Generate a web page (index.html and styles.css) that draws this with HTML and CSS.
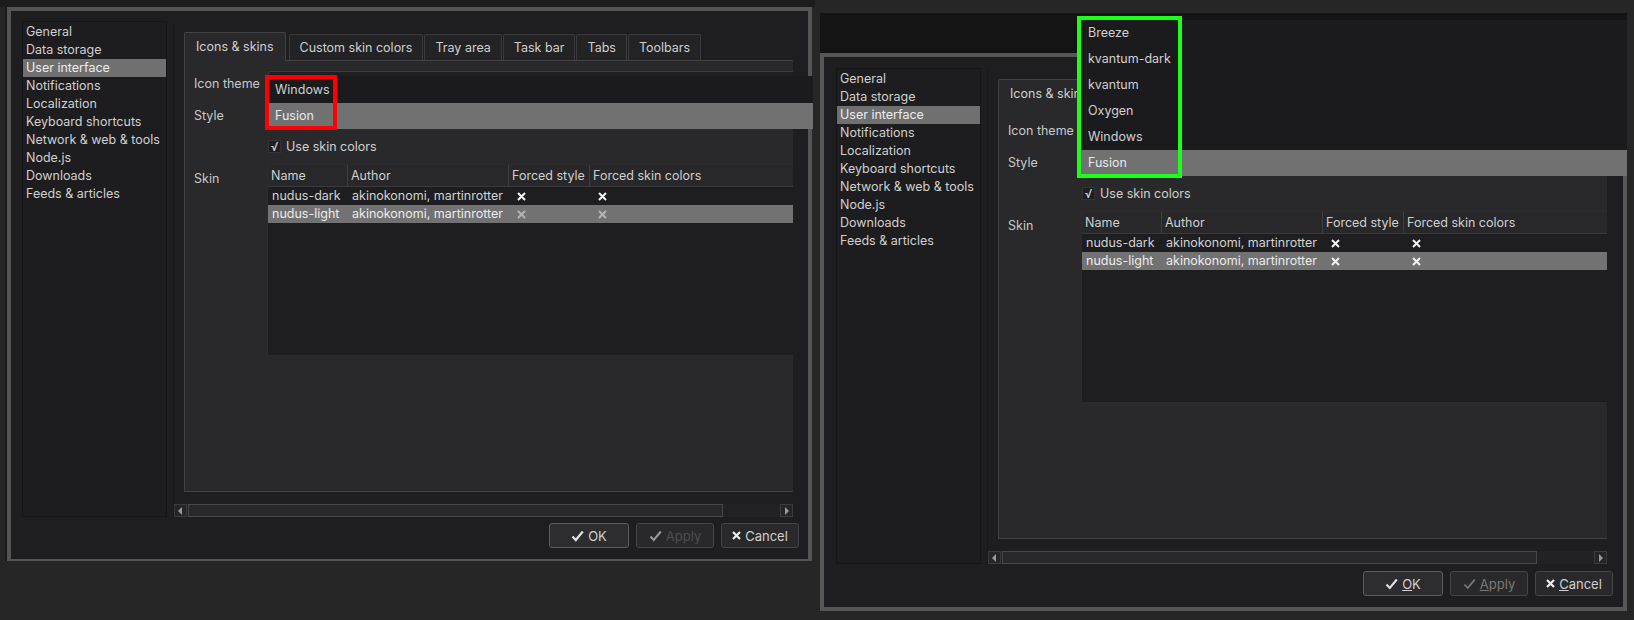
FILE: index.html
```html
<!DOCTYPE html>
<html lang="en">
<head>
    <meta charset="UTF-8">
    <title>Settings - User interface</title>
    <link rel="stylesheet" href="styles.css">
</head>
<body>
<div class="desktop">
    <div class="backdrop-left"></div>
    <div class="backdrop-right"></div>

    <!-- left dialog -->
    <div class="window win-left">
        <div class="win-body">
            <ul class="nav">
                <li>General</li>
                <li>Data storage</li>
                <li class="selected">User interface</li>
                <li>Notifications</li>
                <li>Localization</li>
                <li>Keyboard shortcuts</li>
                <li>Network &amp; web &amp; tools</li>
                <li>Node.js</li>
                <li>Downloads</li>
                <li>Feeds &amp; articles</li>
            </ul>
            <div class="scroll">
                <div class="viewport">
                    <div class="tabwidget">
                        <div class="tabbar">
                            <div class="tab active">Icons &amp; skins</div>
                            <div class="tab">Custom skin colors</div>
                            <div class="tab">Tray area</div>
                            <div class="tab">Task bar</div>
                            <div class="tab">Tabs</div>
                            <div class="tab">Toolbars</div>
                        </div>
                        <div class="pane">
                            <div class="row">
                                <span class="label">Icon theme</span>
                                <div class="combo"></div>
                            </div>
                            <div class="row row-style">
                                <span class="label">Style</span>
                                <div class="combo"></div>
                            </div>
                            <div class="row row-check">
                                <span class="checkbox">&#x221A;</span>
                                <span>Use skin colors</span>
                            </div>
                            <div class="row row-skin">
                                <span class="label">Skin</span>
                                <div class="table">
                                    <div class="cols thead">
                                        <div>Name</div><div>Author</div><div>Forced style</div><div>Forced skin colors</div>
                                    </div>
                                    <div class="cols trow">
                                        <div>nudus-dark</div><div>akinokonomi, martinrotter</div>
                                        <div class="cross"><svg width="9" height="9" viewBox="0 0 9 9"><path d="M1 1L8 8M8 1L1 8" stroke="currentColor" stroke-width="2"/></svg></div>
                                        <div class="cross"><svg width="9" height="9" viewBox="0 0 9 9"><path d="M1 1L8 8M8 1L1 8" stroke="currentColor" stroke-width="2"/></svg></div>
                                    </div>
                                    <div class="cols trow selected">
                                        <div>nudus-light</div><div>akinokonomi, martinrotter</div>
                                        <div class="cross dim"><svg width="9" height="9" viewBox="0 0 9 9"><path d="M1 1L8 8M8 1L1 8" stroke="currentColor" stroke-width="2"/></svg></div>
                                        <div class="cross dim"><svg width="9" height="9" viewBox="0 0 9 9"><path d="M1 1L8 8M8 1L1 8" stroke="currentColor" stroke-width="2"/></svg></div>
                                    </div>
                                </div>
                            </div>
                        </div>
                    </div>
                </div>
                <div class="hscroll">
                    <div class="sb-btn"><svg width="5" height="8" viewBox="0 0 5 8"><path d="M4 0V8L0 4Z" fill="#9a9a9a"/></svg></div>
                    <div class="sb-track"><div class="sb-handle"></div></div>
                    <div class="sb-btn"><svg width="5" height="8" viewBox="0 0 5 8"><path d="M1 0V8L5 4Z" fill="#9a9a9a"/></svg></div>
                </div>
            </div>
        </div>
        <div class="buttons">
            <div class="btn btn-ok"><svg width="13" height="12" viewBox="0 0 13 12"><path d="M1.5 6.5L4.8 10L11.8 1.5" fill="none" stroke="#e2e2e2" stroke-width="2.2"/></svg>OK</div>
            <div class="btn btn-apply"><svg width="13" height="12" viewBox="0 0 13 12"><path d="M1.5 6.5L4.8 10L11.8 1.5" fill="none" stroke="#9a9a9a" stroke-width="2"/></svg>Apply</div>
            <div class="btn btn-cancel"><svg width="9" height="9" viewBox="0 0 9 9"><path d="M1 1L8 8M8 1L1 8" stroke="#ececec" stroke-width="2.2"/></svg>Cancel</div>
        </div>
    </div>

    <!-- right dialog -->
    <div class="window win-right">
        <div class="win-body">
            <ul class="nav">
                <li>General</li>
                <li>Data storage</li>
                <li class="selected">User interface</li>
                <li>Notifications</li>
                <li>Localization</li>
                <li>Keyboard shortcuts</li>
                <li>Network &amp; web &amp; tools</li>
                <li>Node.js</li>
                <li>Downloads</li>
                <li>Feeds &amp; articles</li>
            </ul>
            <div class="scroll">
                <div class="viewport">
                    <div class="tabwidget">
                        <div class="tabbar">
                            <div class="tab active">Icons &amp; skins</div>
                            <div class="tab">Custom skin colors</div>
                            <div class="tab">Tray area</div>
                            <div class="tab">Task bar</div>
                            <div class="tab">Tabs</div>
                            <div class="tab">Toolbars</div>
                        </div>
                        <div class="pane">
                            <div class="row">
                                <span class="label">Icon theme</span>
                                <div class="combo"></div>
                            </div>
                            <div class="row row-style">
                                <span class="label">Style</span>
                                <div class="combo"></div>
                            </div>
                            <div class="row row-check">
                                <span class="checkbox">&#x221A;</span>
                                <span>Use skin colors</span>
                            </div>
                            <div class="row row-skin">
                                <span class="label">Skin</span>
                                <div class="table">
                                    <div class="cols thead">
                                        <div>Name</div><div>Author</div><div>Forced style</div><div>Forced skin colors</div>
                                    </div>
                                    <div class="cols trow">
                                        <div>nudus-dark</div><div>akinokonomi, martinrotter</div>
                                        <div class="cross"><svg width="9" height="9" viewBox="0 0 9 9"><path d="M1 1L8 8M8 1L1 8" stroke="currentColor" stroke-width="2"/></svg></div>
                                        <div class="cross"><svg width="9" height="9" viewBox="0 0 9 9"><path d="M1 1L8 8M8 1L1 8" stroke="currentColor" stroke-width="2"/></svg></div>
                                    </div>
                                    <div class="cols trow selected">
                                        <div>nudus-light</div><div>akinokonomi, martinrotter</div>
                                        <div class="cross"><svg width="9" height="9" viewBox="0 0 9 9"><path d="M1 1L8 8M8 1L1 8" stroke="currentColor" stroke-width="2"/></svg></div>
                                        <div class="cross"><svg width="9" height="9" viewBox="0 0 9 9"><path d="M1 1L8 8M8 1L1 8" stroke="currentColor" stroke-width="2"/></svg></div>
                                    </div>
                                </div>
                            </div>
                        </div>
                    </div>
                </div>
                <div class="hscroll">
                    <div class="sb-btn"><svg width="5" height="8" viewBox="0 0 5 8"><path d="M4 0V8L0 4Z" fill="#9a9a9a"/></svg></div>
                    <div class="sb-track"><div class="sb-handle"></div></div>
                    <div class="sb-btn"><svg width="5" height="8" viewBox="0 0 5 8"><path d="M1 0V8L5 4Z" fill="#9a9a9a"/></svg></div>
                </div>
            </div>
        </div>
        <div class="buttons">
            <div class="btn btn-ok"><svg width="13" height="12" viewBox="0 0 13 12"><path d="M1.5 6.5L4.8 10L11.8 1.5" fill="none" stroke="#e2e2e2" stroke-width="2"/></svg><span><u>O</u>K</span></div>
            <div class="btn btn-apply"><svg width="13" height="12" viewBox="0 0 13 12"><path d="M1.5 6.5L4.8 10L11.8 1.5" fill="none" stroke="#7a7a7a" stroke-width="1.8"/></svg><span><u>A</u>pply</span></div>
            <div class="btn btn-cancel"><svg width="9" height="9" viewBox="0 0 9 9"><path d="M1 1L8 8M8 1L1 8" stroke="#ececec" stroke-width="2.2"/></svg><span><u>C</u>ancel</span></div>
        </div>
    </div>

    <!-- open combo box popups -->
    <div class="popup popup-left">
        <div>Windows</div>
        <div class="current">Fusion</div>
    </div>
    <div class="popup popup-right">
        <div>Breeze</div>
        <div>kvantum-dark</div>
        <div>kvantum</div>
        <div>Oxygen</div>
        <div>Windows</div>
        <div class="current">Fusion</div>
    </div>

    <div class="mark mark-red"></div>
    <div class="mark mark-green"></div>
</div>
</body>
</html>
```

FILE: styles.css
```css
* {
    box-sizing: border-box;
}
body {
    margin: 0;
    background: #262626;
    font-family: Inter, "Noto Sans", sans-serif;
    font-size: 12.5px;
    color: #cfcfcf;
}
.desktop {
    position: relative;
    width: 1634px;
    height: 620px;
    overflow: hidden;
}
.backdrop-left {
    position: absolute;
    left: 0;
    top: 0;
    width: 815px;
    height: 7px;
    background: #1c1c1d;
}
.backdrop-right {
    position: absolute;
    left: 820px;
    top: 13px;
    width: 807px;
    height: 40px;
    background: #141414;
}

/* dialog windows */
.window {
    position: absolute;
    display: flex;
    flex-direction: column;
    background: #1e1e20;
    border: 4px solid #545454;
}
.win-left {
    left: 7px;
    top: 7px;
    width: 805px;
    height: 554px;
    padding: 10px 9px 0 11px;
    border-bottom-width: 2px;
    box-shadow: -2px 0 0 #1a1a1a;
}
.win-right {
    left: 820px;
    top: 53px;
    width: 807px;
    height: 558px;
    padding: 11px 10px 0 12px;
    border-color: #575757;
}
.win-body {
    display: flex;
    gap: 6px;
    height: 496px;
    margin-right: 6px;
}

/* page list */
.nav {
    list-style: none;
    margin: 0;
    padding: 1px 0 0;
    width: 145px;
    flex-shrink: 0;
    background: #1d1d1f;
    border: 1px solid #151517;
}
.nav li {
    height: 18px;
    line-height: 18px;
    padding-left: 3px;
    color: #d0d0d0;
    white-space: nowrap;
}
.nav li.selected {
    background: #707070;
    color: #ececec;
}

/* scroll area */
.scroll {
    width: 620px;
    flex-shrink: 0;
    display: flex;
    flex-direction: column;
    border-left: 1px solid #19191b;
}
.viewport {
    flex: 1;
    overflow: hidden;
    padding: 11px 0 12px 10px;
}
.tabwidget {
    width: 640px;
    height: 100%;
    display: flex;
    flex-direction: column;
}
.tabbar {
    display: flex;
    align-items: flex-end;
    gap: 1px;
    height: 28px;
    flex-shrink: 0;
}
.tab {
    height: 26px;
    line-height: 25px;
    padding: 0 10px;
    background: #232325;
    border: 1px solid #3a3a3c;
    border-bottom: none;
    border-radius: 2px 2px 0 0;
    white-space: nowrap;
    color: #cfcfcf;
}
.tab.active {
    position: relative;
    z-index: 1;
    height: 29px;
    line-height: 27px;
    margin-bottom: -1px;
    margin-right: 2px;
    padding: 0 11px;
    background: #29292b;
    border-color: #424244;
}
.pane {
    flex: 1;
    background: #29292b;
    border: 1px solid #424244;
    padding: 10px 0 0 9px;
}

/* form rows */
.row {
    display: flex;
    align-items: center;
}
.label {
    width: 74px;
    flex-shrink: 0;
    color: #c8c8c8;
    white-space: nowrap;
}
.combo {
    flex: 1;
    height: 25px;
    margin-right: 20px;
    background: #1f1f21;
    border: 1px solid #3c3c3e;
    border-radius: 2px;
}
.row-style {
    margin-top: 7px;
}
.row-check {
    margin-top: 10px;
    height: 16px;
    padding-left: 74px;
    gap: 5px;
}
.checkbox {
    width: 13px;
    height: 13px;
    background: #1f1f21;
    border: 1px solid #343436;
    font-size: 12px;
    line-height: 11px;
    text-align: center;
    color: #d6d6d6;
}
.row-skin {
    margin-top: 10px;
    align-items: flex-start;
}
.row-skin .label {
    padding-top: 7px;
}

/* skins table */
.table {
    flex: 1;
    height: 192px;
    margin-left: -1px;
    margin-right: 10px;
    background: #1e1e20;
    border: 1px solid #2c2c2e;
}
.cols {
    display: grid;
    grid-template-columns: 80px 161px 81px 1fr;
}
.thead {
    height: 22px;
    background: #28282a;
    border-bottom: 1px solid #3a3a3c;
}
.thead div {
    padding-left: 3px;
    line-height: 21px;
    border-right: 1px solid #3e3e40;
    white-space: nowrap;
}
.trow {
    height: 18px;
    line-height: 18px;
    color: #d2d2d2;
}
.trow div {
    padding-left: 4px;
    white-space: nowrap;
}
.trow.selected {
    background: #727272;
    color: #ececec;
}
.trow .cross {
    display: flex;
    align-items: center;
    padding-left: 8px;
    color: #f2f2f2;
}
.trow .cross.dim {
    color: #b4b4b4;
}

/* horizontal scroll bar */
.hscroll {
    display: flex;
    height: 13px;
    flex-shrink: 0;
    background: #222224;
}
.sb-btn {
    width: 13px;
    height: 13px;
    display: flex;
    align-items: center;
    justify-content: center;
    background: #252527;
    border: 1px solid #3c3c3e;
}
.sb-track {
    flex: 1;
    display: flex;
}
.sb-handle {
    width: 535px;
    margin-left: 1px;
    background: #28282a;
    border: 1px solid #48484a;
}

/* dialog buttons */
.buttons {
    display: flex;
    justify-content: flex-end;
    gap: 7px;
    margin-top: 6px;
}
.win-right .buttons {
    margin-top: 7px;
}
.btn {
    height: 25px;
    display: flex;
    align-items: center;
    justify-content: center;
    gap: 4px;
    background: #29292b;
    border: 1px solid #454547;
    border-radius: 3px;
    color: #d0d0d0;
    font-size: 13px;
}
.btn-ok {
    width: 80px;
    background: #2d2d2f;
    border-color: #5c5c5e;
}
.btn-apply {
    width: 78px;
    color: #4e4e50;
}
.win-right .btn-apply {
    color: #7a7a7a;
}
.btn-cancel {
    width: 78px;
}

/* open combo popups */
.popup {
    position: absolute;
    z-index: 5;
    background: #1b1b1d;
}
.popup div {
    height: 26px;
    line-height: 26px;
    padding-left: 7px;
    color: #d0d0d0;
}
.popup .current {
    background: #717171;
    color: #e8e8e8;
}
.popup-left {
    left: 268px;
    top: 76px;
    width: 545px;
    padding-top: 1px;
}
.popup-right {
    left: 1080px;
    top: 20px;
    width: 547px;
}
.popup-right div {
    padding-left: 8px;
}

/* annotation boxes */
.mark {
    position: absolute;
    z-index: 6;
    border: 4px solid;
}
.mark-red {
    left: 265px;
    top: 75px;
    width: 72px;
    height: 55px;
    border-color: #ff0000;
}
.mark-green {
    left: 1077px;
    top: 16px;
    width: 105px;
    height: 162px;
    border-color: #1bff1b;
}
```
